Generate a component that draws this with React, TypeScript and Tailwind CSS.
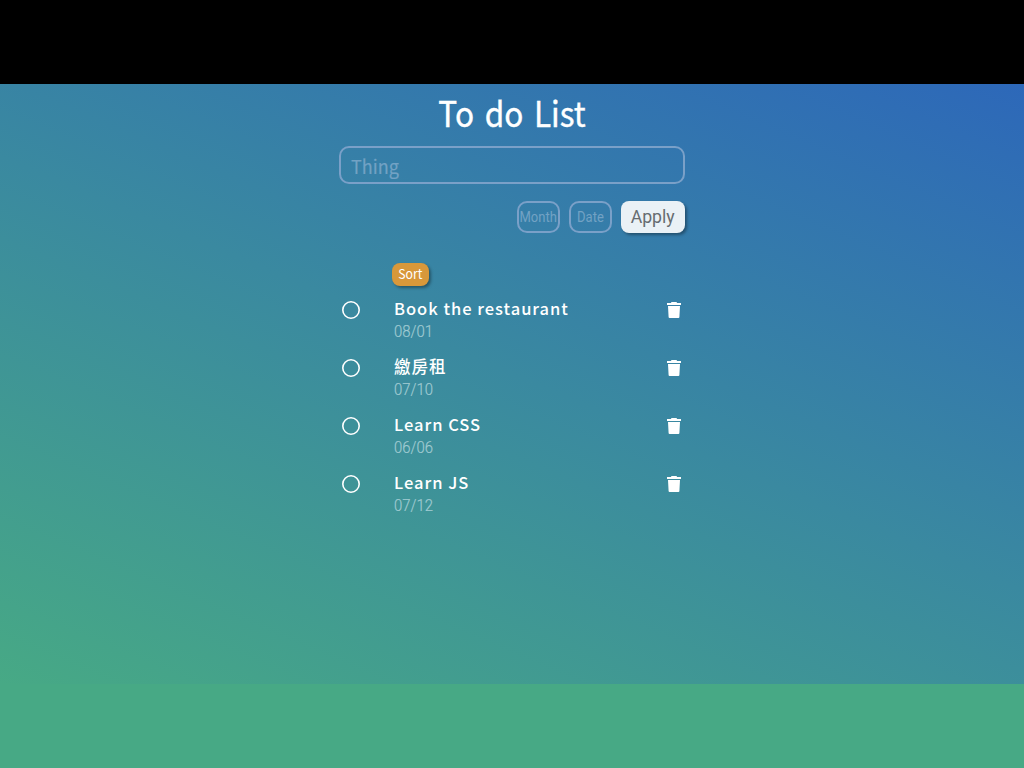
const items = [
  { title: 'Book the restaurant', date: '08/01' },
  { title: '繳房租', date: '07/10' },
  { title: 'Learn CSS', date: '06/06' },
  { title: 'Learn JS', date: '07/12' },
];

function Trash() {
  return (
    <svg className="block h-4 w-3.5" viewBox="0 0 14 16" fill="#fff">
      <path d="M4.5 0h5l.6 1H14v2H0V1h3.9zM1 4h12l-.6 11a1 1 0 0 1-1 1H2.6a1 1 0 0 1-1-1z" />
    </svg>
  );
}

function Circle() {
  return (
    <svg className="mt-[5px] ml-[3px] block size-[18px] shrink-0" viewBox="0 0 18 18" fill="none" stroke="#fff" strokeWidth="1.6">
      <circle cx="9" cy="9" r="8.2" />
    </svg>
  );
}

export default function App() {
  return (
    <div className="flex h-[768px] w-[1024px] flex-col overflow-hidden bg-[#47a985] font-['Noto_Sans_CJK_TC','Noto_Sans',sans-serif] text-white">
      <div className="h-[84px] shrink-0 bg-black" />
      <main className="flex h-[600px] shrink-0 flex-col items-center bg-[linear-gradient(23deg,#47a985_0%,#3a89a0_51%,#2d68b9_100%)]">
        <div className="flex w-[346px] flex-col">
          <h1 className="mt-[4px] h-[48px] scale-x-[0.9] text-center text-[35px] leading-[48px] [word-spacing:4px] whitespace-nowrap [-webkit-text-stroke:0.4px_white]">To do List</h1>
          <div className="mt-[10px] flex h-[38px] items-center rounded-[10px] border-2 border-[#7aa0c8] pt-[1px] pl-[10px] text-[19px] leading-[28px] text-[#72a2c4]">
            <span className="origin-left scale-x-[0.95] [-webkit-text-stroke:0.2px_#72a2c4]">Thing</span>
          </div>
          <div className="mt-[17px] flex h-8 justify-end gap-[9px] font-['Roboto',sans-serif]">
            <div className="flex w-[43px] items-center justify-center rounded-[10px] border-2 border-[#7aa0c8] text-[14px] text-[#72a2c4]"><span className="scale-x-[0.93]">Month</span></div>
            <div className="flex w-[43px] items-center justify-center rounded-[10px] border-2 border-[#7aa0c8] text-[14px] text-[#72a2c4]"><span className="scale-x-[0.93]">Date</span></div>
            <button className="w-16 rounded-[8px] bg-[#eaf1f6] pb-[1px] text-[19px] leading-[30px] text-[#666c70] shadow-[2px_2px_3px_rgba(0,0,0,0.35)]"><span className="inline-block scale-x-[0.93]">Apply</span></button>
          </div>
          <button className="mt-[30px] ml-[53px] h-[23px] w-[37px] rounded-[8px] bg-[#d8983a] pb-[2px] text-[13.5px] leading-[21px] shadow-[2px_2px_3px_rgba(0,0,0,0.35)]"><span className="inline-block scale-x-[0.91]">Sort</span></button>
          <ul className="mt-[10px]">
            {items.map((item) => (
              <li key={item.title} className="flex h-[58px]">
                <Circle />
                <div className="ml-[33px] flex-1">
                  <div className="h-[26px] pl-px text-[16.5px] leading-[25px] font-medium tracking-[0.98px] whitespace-nowrap">{item.title}</div>
                  <div className="h-[20px] pl-px font-['Roboto',sans-serif] text-[16px] leading-[20px] text-[#9fcad1]"><span className="inline-block origin-left scale-x-[0.93] font-light [-webkit-text-stroke:0.2px_#a4cdd4]">{item.date}</span></div>
                </div>
                <span className="mt-[6px] mr-1"><Trash /></span>
              </li>
            ))}
          </ul>
        </div>
      </main>
    </div>
  );
}
